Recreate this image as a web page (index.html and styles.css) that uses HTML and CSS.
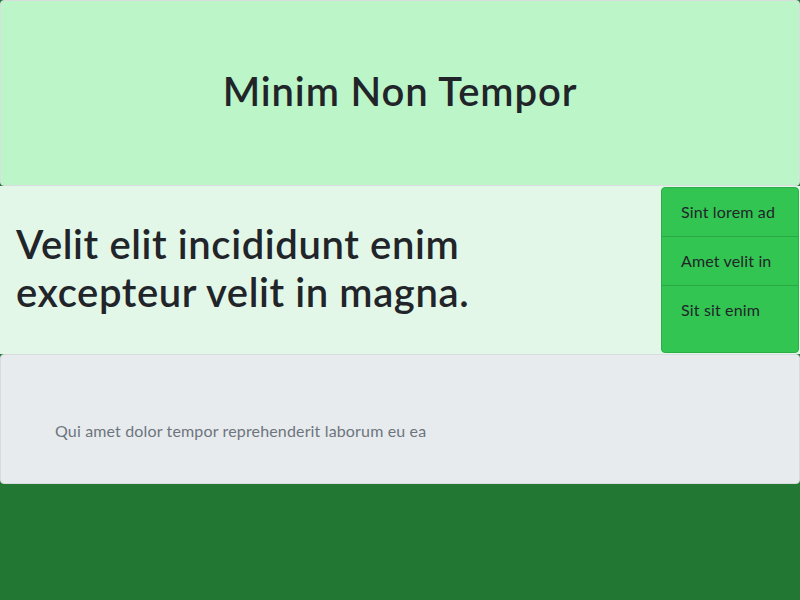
FILE: index.html
```html
<!DOCTYPE html>
<html>
<head>
<meta charset="utf-8">
<link rel="stylesheet" href="styles.css">
</head>
<body>
<div class="page">
  <header class="hero">
    <h1 class="hero-title">Minim Non Tempor</h1>
  </header>
  <section class="feature">
    <h2 class="feature-title">Velit elit incididunt enim excepteur velit in magna.</h2>
    <ul class="list">
      <li class="list-item">Sint lorem ad</li>
      <li class="list-item">Amet velit in</li>
      <li class="list-item list-item-last">Sit sit enim</li>
    </ul>
  </section>
  <section class="card">
    <p class="card-text">Qui amet dolor tempor reprehenderit laborum eu ea</p>
  </section>
</div>
</body>
</html>
```
FILE: styles.css
```css
html, body {
  margin: 0;
  padding: 0;
}
body {
  background: #227733;
  font-family: Lato, "Liberation Sans", sans-serif;
  color: #212529;
}
.page {
  display: flex;
  flex-direction: column;
}
.hero {
  box-sizing: border-box;
  height: 186px;
  padding-bottom: 4px;
  background: #bbf5c8;
  border: 1px solid #dadde0;
  border-radius: 4px;
  display: flex;
  align-items: center;
  justify-content: center;
}
.hero-title {
  margin: 0;
  font-size: 40px;
  font-weight: 600;
  line-height: 48px;
  letter-spacing: 0.9px;
}
.feature {
  height: 168px;
  background: #e3f7e8;
  display: flex;
  align-items: center;
}
.feature-title {
  flex: 1;
  margin: 0;
  padding: 0 150px 4px 16px;
  font-size: 40px;
  font-weight: 600;
  line-height: 48px;
  letter-spacing: 0.6px;
}
.list {
  box-sizing: border-box;
  align-self: stretch;
  width: 138px;
  margin: 1px 1px 1px 0;
  padding: 0;
  list-style: none;
  background: #32c552;
  border: 1px solid #2bae48;
  border-radius: 4px;
  display: flex;
  flex-direction: column;
}
.list-item {
  padding: 12px 19px;
  font-size: 16px;
  line-height: 24px;
  letter-spacing: 0.15px;
  border-bottom: 1px solid #2aa846;
}
.list-item-last {
  flex: 1;
  border-bottom: 0;
}
.card {
  box-sizing: border-box;
  height: 130px;
  background: #e8ebee;
  border: 1px solid #d8dbdf;
  border-radius: 4px;
  padding: 64px 54px 0;
}
.card-text {
  margin: 0;
  font-size: 16px;
  line-height: 24px;
  letter-spacing: 0.15px;
  color: #6c757d;
}
```
